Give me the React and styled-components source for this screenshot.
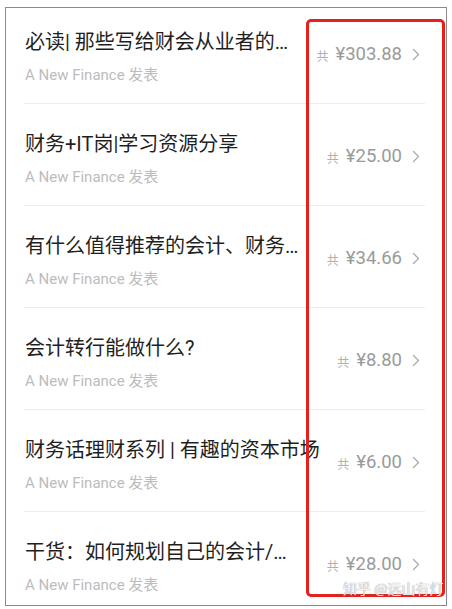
import React from 'react'
import styled, { createGlobalStyle } from 'styled-components'

const GlobalStyle = createGlobalStyle`
    html, body {
        margin: 0;
        padding: 0;
        background: #ffffff;
    }
    body {
        font-family: Roboto, "Noto Sans CJK SC", sans-serif;
    }
`

const Page = styled.div`
    position: relative;
    width: 452px;
    height: 609px;
    padding: 7px 0 0 5px;
    box-sizing: border-box;
`

const Frame = styled.div`
    position: relative;
    width: 442px;
    height: 599px;
    box-sizing: border-box;
    border: 1px solid #8a8a8a;
    overflow: hidden;
    background: #fff;
`

const List = styled.div`
    display: flex;
    flex-direction: column;
    margin-top: -6px;
`

const Row = styled.div`
    display: flex;
    flex-direction: column;
    height: 102px;
`

const RowBody = styled.div`
    flex: 1;
    display: flex;
    align-items: flex-start;
    justify-content: space-between;
    padding: 26px 26px 0 19px;
`

const Info = styled.div`
    display: flex;
    flex-direction: column;
    gap: 8px;
    min-width: 0;
`

const Title = styled.div`
    font-family: Roboto, "Noto Sans CJK SC", sans-serif;
    font-size: 20px;
    line-height: 28px;
    color: #1f1f1f;
    white-space: nowrap;
`

const Author = styled.div`
    font-family: Roboto, "Noto Sans CJK SC", sans-serif;
    font-size: 15px;
    line-height: 22px;
    color: #bcbcbc;
    white-space: nowrap;
`

const Price = styled.div`
    display: flex;
    align-items: center;
    margin-top: 14px;
    flex-shrink: 0;
    height: 24px;
    color: #9c9c9c;
`

const Total = styled.span`
    font-family: "Noto Sans CJK SC", sans-serif;
    font-size: 12px;
    color: #b0b0b0;
    margin-right: 7px;
    margin-top: 3px;
`

const Amount = styled.span`
    font-family: Roboto, sans-serif;
    font-size: 18.5px;
    line-height: 24px;
    color: #9a9a9a;
    margin-right: 10px;
`

const Divider = styled.div`
    height: 1px;
    margin: 0 21px 0 18px;
    background: ${(p) => (p.$hidden ? 'transparent' : '#ececec')};
`

const Highlight = styled.div`
    position: absolute;
    left: 306px;
    top: 19px;
    width: 139px;
    height: 578px;
    box-sizing: border-box;
    border: 3px solid #e4211d;
    border-radius: 5px;
    pointer-events: none;
`

const Watermark = styled.div`
    position: absolute;
    left: 343px;
    top: 579px;
    font-family: "Noto Sans CJK SC", sans-serif;
    font-size: 14px;
    line-height: 18px;
    color: rgba(255, 255, 255, 0.85);
    text-shadow: 0 0 1px rgba(120, 120, 120, 0.6), 0 0 1px rgba(120, 120, 120, 0.6);
    white-space: nowrap;
`

const Chevron = () => (
    <svg width="8" height="13" viewBox="0 0 8 13" fill="none">
        <path d="M1.5 1.5 L6.5 6.5 L1.5 11.5" stroke="#aaaaaa" strokeWidth="1.3" strokeLinecap="round" strokeLinejoin="round" />
    </svg>
)

const items = [
    { title: '必读| 那些写给财会从业者的…', price: '¥303.88' },
    { title: '财务+IT岗|学习资源分享', price: '¥25.00' },
    { title: '有什么值得推荐的会计、财务…', price: '¥34.66' },
    { title: '会计转行能做什么?', price: '¥8.80' },
    { title: '财务话理财系列 | 有趣的资本市场', price: '¥6.00' },
    { title: '干货：如何规划自己的会计/…', price: '¥28.00' },
]

const App = () => {
    return (
        <>
            <GlobalStyle />
            <Page>
                <Frame>
                    <List>
                        {items.map((item, index) => (
                            <Row key={index}>
                                <RowBody>
                                    <Info>
                                        <Title>{item.title}</Title>
                                        <Author>A New Finance 发表</Author>
                                    </Info>
                                    <Price>
                                        <Total>共</Total>
                                        <Amount>{item.price}</Amount>
                                        <Chevron />
                                    </Price>
                                </RowBody>
                                <Divider $hidden={index === items.length - 1} />
                            </Row>
                        ))}
                    </List>
                </Frame>
                <Highlight />
                <Watermark>知乎 @远山有灯</Watermark>
            </Page>
        </>
    )
}

export default App
